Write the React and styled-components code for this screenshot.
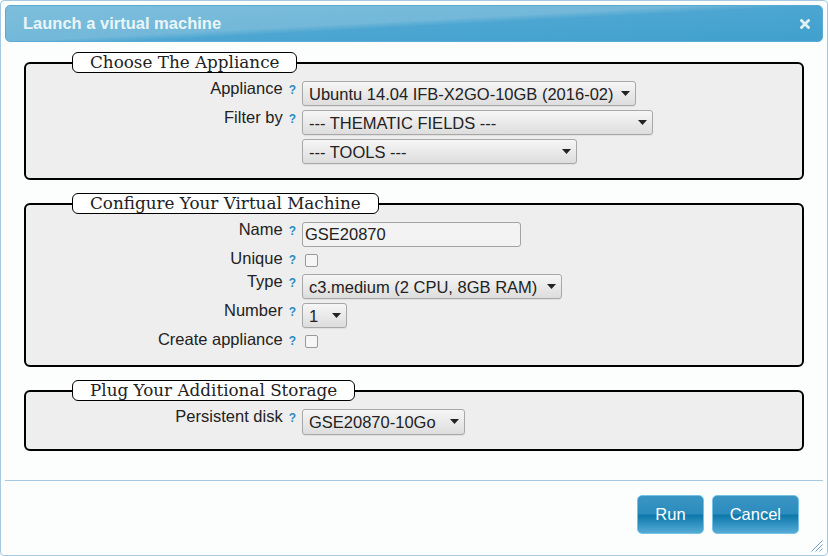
import React from 'react';
import styled, { createGlobalStyle } from 'styled-components';

const Global = createGlobalStyle`
  html, body { margin: 0; padding: 0; background: #ffffff; }
  body { font-family: "Liberation Sans", Arial, sans-serif; }
  *, *::before, *::after { box-sizing: border-box; }
`;

const Dialog = styled.div`
  position: relative;
  width: 828px;
  height: 556px;
  border: 1px solid #a6c9e2;
  border-radius: 4px;
  background: #fcfdfd;
  padding: 4px;
  display: flex;
  flex-direction: column;
  font-size: 16.5px;
  color: #222222;
`;

const TitleBar = styled.div`
  height: 37px;
  flex: none;
  border: 1px solid #5aaad4;
  border-radius: 5px;
  background: linear-gradient(177deg, #7dbedc 0%, #73b8d9 46%, #4ca6d1 54%, #41a0cd 100%);
  display: flex;
  align-items: center;
  justify-content: space-between;
  padding: 0 12px 0 17px;
`;

const Title = styled.span`
  color: #eaf5f8;
  font-weight: bold;
  font-size: 16.5px;
`;

const CloseButton = styled.button`
  border: 0;
  padding: 0;
  background: transparent;
  width: 10px;
  height: 10px;
  display: flex;
  cursor: pointer;
`;

const Body = styled.div`
  flex: 1;
  padding: 10px 19px 0;
  display: flex;
  flex-direction: column;
  gap: 13px;
`;

const Fieldset = styled.fieldset`
  margin: 0;
  min-width: 0;
  border: 2px solid #000000;
  border-radius: 6px;
  background: #eeeeee;
  padding: 8px 0 14px;
`;

const Legend = styled.legend`
  margin-left: 46px;
  padding: 0 17px;
  border: 1px solid #000000;
  border-radius: 6px;
  background: #ffffff;
  font-family: "DejaVu Serif", serif;
  font-size: 16.8px;
  line-height: 19px;
  color: #222222;
`;

const Rows = styled.div`
  display: flex;
  flex-direction: column;
  gap: 4px;
`;

const Row = styled.div`
  display: grid;
  grid-template-columns: 276px auto;
  justify-content: start;
  align-items: start;
`;

const LabelCell = styled.div`
  display: flex;
  justify-content: flex-end;
  align-items: baseline;
  gap: 6px;
  padding-right: 6px;
  margin-top: -2px;
  line-height: 18px;
`;

const ControlCell = styled.div`
  display: flex;
  align-items: flex-start;
`;

const Label = styled.label`
  font-size: 16.5px;
  color: #222222;
`;

const Help = styled.span`
  font-size: 12px;
  font-weight: bold;
  color: #2a8bc3;
  cursor: help;
`;

const SelectWrap = styled.div`
  position: relative;
  width: ${(p) => p.$w}px;
  height: ${(p) => p.$h || 25}px;
`;

const Select = styled.select`
  appearance: none;
  -webkit-appearance: none;
  display: block;
  width: 100%;
  height: 100%;
  margin: 0;
  border: 1px solid #a8a8a8;
  border-radius: 3px;
  background: linear-gradient(#f6f6f6, #dddddd);
  box-shadow: 0 1px 1px rgba(0, 0, 0, 0.06);
  font-family: "Liberation Sans", Arial, sans-serif;
  font-size: 16.5px;
  color: #222222;
  padding: 0 22px 0 6px;
  outline: none;
`;

const Caret = styled.svg`
  position: absolute;
  right: 6px;
  top: 50%;
  margin-top: -3px;
  pointer-events: none;
`;

const TextInput = styled.input`
  display: block;
  width: 219px;
  height: 25px;
  margin: 0;
  border: 1px solid #a3a3a3;
  border-radius: 3px;
  background: #f3f3f3;
  font-family: "Liberation Sans", Arial, sans-serif;
  font-size: 16.5px;
  color: #222222;
  padding: 0 2px;
  outline: none;
`;

const Checkbox = styled.input.attrs({ type: 'checkbox' })`
  appearance: none;
  -webkit-appearance: none;
  display: block;
  width: 13px;
  height: 13px;
  margin: 3px;
  border: 1px solid #999999;
  border-radius: 2px;
  background: #f6f6f6;
`;

const ButtonPane = styled.div`
  flex: none;
  border-top: 1px solid #a6c9e2;
  padding: 14px 24px 17px;
  display: flex;
  justify-content: flex-end;
  gap: 8px;
`;

const Button = styled.button`
  height: 39px;
  padding: 0 17px;
  border: 1px solid #76c2e7;
  border-radius: 5px;
  background: linear-gradient(#3a95c2 0%, #2b8cbe 49%, #0b77aa 51%, #2f91c1 76%, #55abd5 100%);
  color: #ffffff;
  font-family: "Liberation Sans", Arial, sans-serif;
  font-size: 16.5px;
  cursor: pointer;
`;

const ResizeHandle = styled.svg`
  position: absolute;
  right: 4px;
  bottom: 3px;
`;

function Dropdown({ width, height, value, options }) {
  return (
    <SelectWrap $w={width} $h={height}>
      <Select defaultValue={value}>
        {(options || [value]).map((o) => (
          <option key={o}>{o}</option>
        ))}
      </Select>
      <Caret width="9" height="5" viewBox="0 0 9 5">
        <path d="M0 0 H9 L4.5 5 Z" fill="#222" />
      </Caret>
    </SelectWrap>
  );
}

function Field({ label, children }) {
  return (
    <Row>
      <LabelCell>
        {label ? <Label>{label}</Label> : null}
        {label ? <Help title="Help">?</Help> : null}
      </LabelCell>
      <ControlCell>{children}</ControlCell>
    </Row>
  );
}

export default function App() {
  return (
    <>
      <Global />
      <Dialog>
        <TitleBar>
          <Title>Launch a virtual machine</Title>
          <CloseButton aria-label="close">
            <svg width="10" height="10" viewBox="0 0 10 10">
              <path d="M1.5 1.5 L8.5 8.5 M8.5 1.5 L1.5 8.5" stroke="#e2f1f8" strokeWidth="2.7" strokeLinecap="square" />
            </svg>
          </CloseButton>
        </TitleBar>
        <Body>
          <Fieldset>
            <Legend>Choose The Appliance</Legend>
            <Rows>
              <Field label="Appliance">
                <Dropdown width={334} value="Ubuntu 14.04 IFB-X2GO-10GB (2016-02)" />
              </Field>
              <Field label="Filter by">
                <Dropdown width={351} value="--- THEMATIC FIELDS ---" />
              </Field>
              <Field>
                <Dropdown width={275} value="--- TOOLS ---" />
              </Field>
            </Rows>
          </Fieldset>
          <Fieldset>
            <Legend>Configure Your Virtual Machine</Legend>
            <Rows>
              <Field label="Name">
                <TextInput defaultValue="GSE20870" />
              </Field>
              <Field label="Unique">
                <Checkbox />
              </Field>
              <Field label="Type">
                <Dropdown width={260} value="c3.medium (2 CPU, 8GB RAM)" />
              </Field>
              <Field label="Number">
                <Dropdown width={45} value="1" />
              </Field>
              <Field label="Create appliance">
                <Checkbox />
              </Field>
            </Rows>
          </Fieldset>
          <Fieldset>
            <Legend>Plug Your Additional Storage</Legend>
            <Rows>
              <Field label="Persistent disk">
                <Dropdown width={163} height={26} value="GSE20870-10Go" />
              </Field>
            </Rows>
          </Fieldset>
        </Body>
        <ButtonPane>
          <Button>Run</Button>
          <Button>Cancel</Button>
        </ButtonPane>
        <ResizeHandle width="12" height="12" viewBox="0 0 12 12">
          <path d="M11.5 0.5 L0.5 11.5 M11.5 4.5 L4.5 11.5 M11.5 8.5 L8.5 11.5" stroke="#6f9fc4" strokeWidth="1" />
        </ResizeHandle>
      </Dialog>
    </>
  );
}
